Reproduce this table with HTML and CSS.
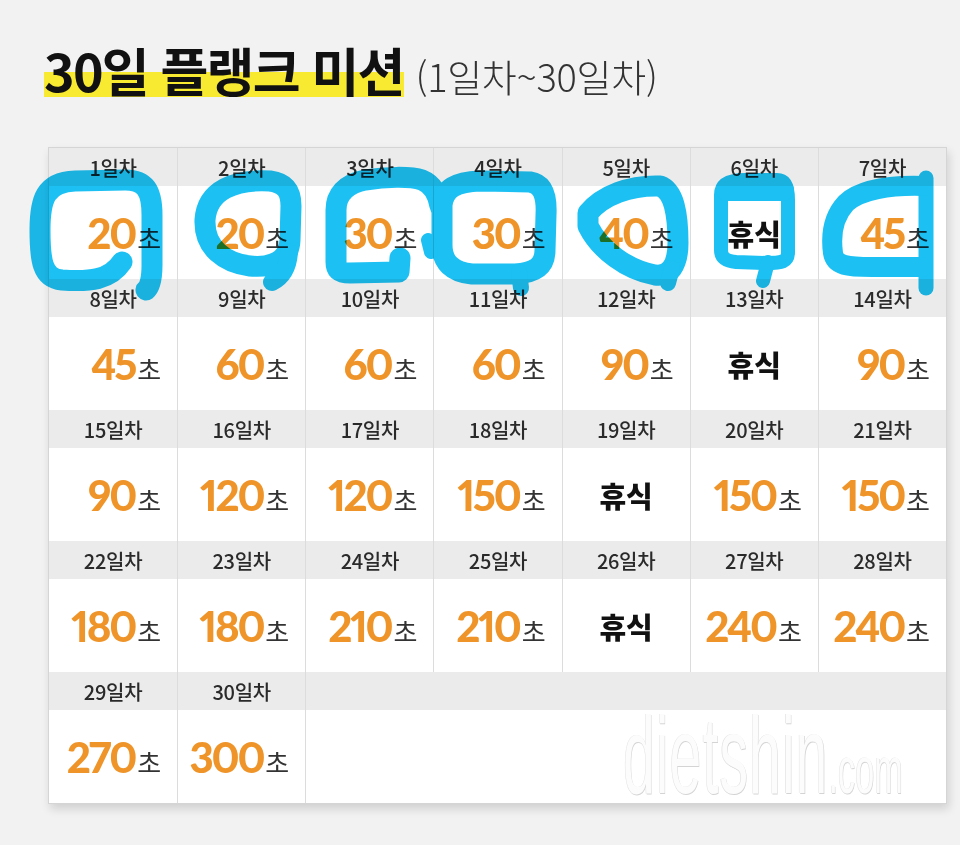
FILE: index.html
```html
<!DOCTYPE html>
<html lang="ko">
<head>
<meta charset="utf-8">
<title>30일 플랭크 미션</title>
<link rel="stylesheet" href="styles.css">
</head>
<body>
<div class="page">
  <h1 class="title"><span class="title-main">30일 플랭크 미션</span><span class="title-sub">(1일차~30일차)</span></h1>

  <div class="board">
    <div class="week">
      <div class="day"><div class="day-label">1일차</div><div class="day-value"><span class="sec"><b class="num">20</b><span class="unit">초</span></span></div></div>
      <div class="day"><div class="day-label">2일차</div><div class="day-value"><span class="sec"><b class="num">20</b><span class="unit">초</span></span></div></div>
      <div class="day"><div class="day-label">3일차</div><div class="day-value"><span class="sec"><b class="num">30</b><span class="unit">초</span></span></div></div>
      <div class="day"><div class="day-label">4일차</div><div class="day-value"><span class="sec"><b class="num">30</b><span class="unit">초</span></span></div></div>
      <div class="day"><div class="day-label">5일차</div><div class="day-value"><span class="sec"><b class="num">40</b><span class="unit">초</span></span></div></div>
      <div class="day"><div class="day-label">6일차</div><div class="day-value rest">휴식</div></div>
      <div class="day"><div class="day-label">7일차</div><div class="day-value"><span class="sec"><b class="num">45</b><span class="unit">초</span></span></div></div>
    </div>
    <div class="week">
      <div class="day"><div class="day-label">8일차</div><div class="day-value"><span class="sec"><b class="num">45</b><span class="unit">초</span></span></div></div>
      <div class="day"><div class="day-label">9일차</div><div class="day-value"><span class="sec"><b class="num">60</b><span class="unit">초</span></span></div></div>
      <div class="day"><div class="day-label">10일차</div><div class="day-value"><span class="sec"><b class="num">60</b><span class="unit">초</span></span></div></div>
      <div class="day"><div class="day-label">11일차</div><div class="day-value"><span class="sec"><b class="num">60</b><span class="unit">초</span></span></div></div>
      <div class="day"><div class="day-label">12일차</div><div class="day-value"><span class="sec"><b class="num">90</b><span class="unit">초</span></span></div></div>
      <div class="day"><div class="day-label">13일차</div><div class="day-value rest">휴식</div></div>
      <div class="day"><div class="day-label">14일차</div><div class="day-value"><span class="sec"><b class="num">90</b><span class="unit">초</span></span></div></div>
    </div>
    <div class="week">
      <div class="day"><div class="day-label">15일차</div><div class="day-value"><span class="sec"><b class="num">90</b><span class="unit">초</span></span></div></div>
      <div class="day"><div class="day-label">16일차</div><div class="day-value"><span class="sec"><b class="num">120</b><span class="unit">초</span></span></div></div>
      <div class="day"><div class="day-label">17일차</div><div class="day-value"><span class="sec"><b class="num">120</b><span class="unit">초</span></span></div></div>
      <div class="day"><div class="day-label">18일차</div><div class="day-value"><span class="sec"><b class="num">150</b><span class="unit">초</span></span></div></div>
      <div class="day"><div class="day-label">19일차</div><div class="day-value rest">휴식</div></div>
      <div class="day"><div class="day-label">20일차</div><div class="day-value"><span class="sec"><b class="num">150</b><span class="unit">초</span></span></div></div>
      <div class="day"><div class="day-label">21일차</div><div class="day-value"><span class="sec"><b class="num">150</b><span class="unit">초</span></span></div></div>
    </div>
    <div class="week">
      <div class="day"><div class="day-label">22일차</div><div class="day-value"><span class="sec"><b class="num">180</b><span class="unit">초</span></span></div></div>
      <div class="day"><div class="day-label">23일차</div><div class="day-value"><span class="sec"><b class="num">180</b><span class="unit">초</span></span></div></div>
      <div class="day"><div class="day-label">24일차</div><div class="day-value"><span class="sec"><b class="num">210</b><span class="unit">초</span></span></div></div>
      <div class="day"><div class="day-label">25일차</div><div class="day-value"><span class="sec"><b class="num">210</b><span class="unit">초</span></span></div></div>
      <div class="day"><div class="day-label">26일차</div><div class="day-value rest">휴식</div></div>
      <div class="day"><div class="day-label">27일차</div><div class="day-value"><span class="sec"><b class="num">240</b><span class="unit">초</span></span></div></div>
      <div class="day"><div class="day-label">28일차</div><div class="day-value"><span class="sec"><b class="num">240</b><span class="unit">초</span></span></div></div>
    </div>
    <div class="week">
      <div class="day"><div class="day-label">29일차</div><div class="day-value"><span class="sec"><b class="num">270</b><span class="unit">초</span></span></div></div>
      <div class="day"><div class="day-label">30일차</div><div class="day-value"><span class="sec"><b class="num">300</b><span class="unit">초</span></span></div></div>
      <div class="day day-empty"><div class="day-label"></div><div class="day-value"></div></div>
    </div>
  </div>
</div>

<div class="watermark"><span class="wm-main">dietshin</span><span class="wm-tld">.com</span></div>

<svg class="marker" width="960" height="845" viewBox="0 0 960 845" aria-hidden="true">
  <g fill="none" stroke="#1cc0f2" stroke-linecap="round" stroke-linejoin="round">
    <path stroke-width="21" d="M122 262 C110 280 90 282 62 280 C42 278 40 260 40 230 C40 200 45 182 75 181 L125 180 C145 180 152 190 152 215 L152 265 C152 278 150 287 146 290"/>
    <path stroke-width="21" d="M270 181 C235 179 207 190 205 220 C204 248 225 263 250 266 C270 268 289 262 290 240 L291 206 C291 191 285 183 270 181 Z"/>
    <path stroke-width="18" d="M289 252 C288 268 282 277 272 282"/>
    <path stroke-width="21" d="M400 258 L399 272 L350 273 C340 273 336 270 336 262 L336 210 C336 195 345 184 365 180 C385 177 410 176 422 180 C432 184 438 194 440 206"/>
    <path stroke-width="21" d="M442 205 C444 188 456 182 480 181 L530 182 C543 184 547 196 546 215 L545 250 C545 266 535 273 515 274 L472 274 C452 272 442 262 442 245 Z"/>
    <path stroke-width="16" d="M519 272 L521 288"/>
    <path stroke-width="14" d="M428 240 L431 252"/>
    <path stroke-width="21" d="M588 213 C603 195 630 185 660 186 C674 191 678 214 678 243 C678 266 669 277 655 275 C627 270 600 250 588 226 Z"/>
    <path stroke-width="16" d="M672 268 L668 283"/>
    <path stroke-width="14" d="M721 250 L721 195 C721 184 729 180 745 180 L777 180 C785 180 788 186 788 200 L788 252 C788 262 782 263 766 263 L736 262 C726 261 721 258 721 250 Z"/>
    <path stroke-width="22" d="M727 190 L783 190"/>
    <path stroke-width="14" d="M768 262 L763 281"/>
    <path stroke-width="15" d="M926 178 L926 288"/>
    <path stroke-width="20" d="M923 186 C890 185 860 190 846 203 C832 218 831 238 833 253 C835 266 848 267 872 267 L922 267"/>
  </g>
</svg>
</body>
</html>
```

FILE: styles.css
```css
html, body {
  margin: 0;
  padding: 0;
}

body {
  position: relative;
  width: 960px;
  height: 845px;
  overflow: hidden;
  background: #f2f2f2;
  font-family: "Noto Sans CJK KR", "Noto Sans", sans-serif;
  color: #222;
}

.page {
  padding: 40px 0 0 44px;
}

.title {
  display: flex;
  align-items: baseline;
  gap: 12px;
  height: 60px;
  margin: 0 0 47px 0;
  font-weight: 700;
}

.title-main {
  font-size: 52px;
  line-height: 60px;
  letter-spacing: -1.8px;
  color: #111;
  background: linear-gradient(to bottom, transparent 54%, #f8ea30 54%, #f8ea30 95%, transparent 95%);
}

.title-sub {
  font-size: 38px;
  font-weight: 300;
  letter-spacing: -0.3px;
  color: #333;
}

.board {
  width: 897px;
  margin-left: 4px;
  background: #fff;
  border: 1px solid #d5d5d5;
  box-shadow: 2px 5px 9px rgba(0, 0, 0, 0.14);
}

.week {
  display: grid;
  grid-template-columns: repeat(7, 1fr);
}

.day {
  display: flex;
  flex-direction: column;
  border-left: 1px solid #dcdcdc;
}

.day:first-child {
  border-left: none;
}

.day-empty {
  grid-column: span 5;
}

.day-label {
  height: 38px;
  display: flex;
  align-items: center;
  justify-content: center;
  background: #ebebeb;
  font-size: 20px;
  font-weight: 500;
  color: #2a2a2a;
  letter-spacing: -0.3px;
}

.day-value {
  height: 93px;
  display: flex;
  align-items: center;
  justify-content: flex-end;
  padding-right: 16px;
}

.day-value.rest {
  justify-content: center;
  padding-right: 0;
  font-size: 29px;
  font-weight: 900;
  color: #111;
}

.sec {
  display: flex;
  align-items: baseline;
}

.num {
  font-family: "Lato", "Inter", sans-serif;
  font-weight: 900;
  font-size: 42px;
  letter-spacing: -2.2px;
  font-variant-numeric: proportional-nums;
  color: #ef9428;
}

.unit {
  margin-left: 2px;
  font-size: 26px;
  font-weight: 400;
  color: #333;
}

.watermark {
  position: absolute;
  left: 623px;
  top: 700px;
  display: flex;
  align-items: baseline;
  transform: scaleX(0.52);
  transform-origin: left top;
  font-family: "Liberation Sans", sans-serif;
  color: #fcfcfc;
  text-shadow: 1px 1px 0 #d4d4d4, -1px 0 0 #e3e3e3;
  pointer-events: none;
}

.wm-main {
  font-size: 110px;
  line-height: 1;
  letter-spacing: 2px;
}

.wm-tld {
  font-size: 66px;
  line-height: 1;
}

.marker {
  position: absolute;
  left: 0;
  top: 0;
  mix-blend-mode: multiply;
  pointer-events: none;
}
```
